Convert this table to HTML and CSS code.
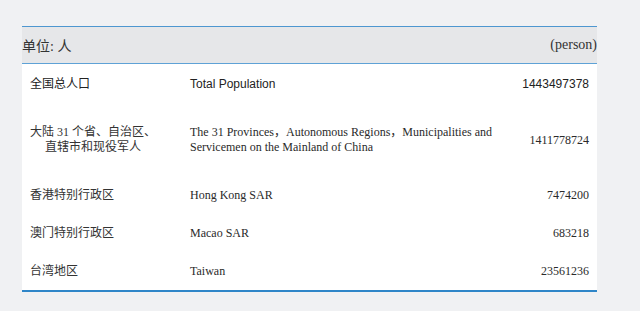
FILE: index.html
```html
<!DOCTYPE html>
<html lang="zh">
<head>
<meta charset="utf-8">
<link rel="stylesheet" href="styles.css">
</head>
<body>
<div class="page">
  <div class="table">
    <div class="head">
      <span class="unit">单位: 人</span>
      <span class="person">(person)</span>
    </div>
    <div class="row first">
      <div class="zh sans">全国总人口</div>
      <div class="en sans">Total Population</div>
      <div class="num sans">1443497378</div>
    </div>
    <div class="row tall">
      <div class="zh"><span class="wrap">大陆 31 个省、自治区、<br>直辖市和现役军人</span></div>
      <div class="en">The 31 Provinces，Autonomous Regions，Municipalities and<br>Servicemen on the Mainland of China</div>
      <div class="num">1411778724</div>
    </div>
    <div class="row">
      <div class="zh">香港特别行政区</div>
      <div class="en">Hong Kong SAR</div>
      <div class="num">7474200</div>
    </div>
    <div class="row">
      <div class="zh">澳门特别行政区</div>
      <div class="en">Macao SAR</div>
      <div class="num">683218</div>
    </div>
    <div class="row">
      <div class="zh">台湾地区</div>
      <div class="en">Taiwan</div>
      <div class="num">23561236</div>
    </div>
  </div>
</div>
</body>
</html>
```
FILE: styles.css
```css
html, body {
  margin: 0;
  padding: 0;
  background: #f0f1f3;
}
.page {
  padding: 26px 43px 0 22px;
  height: 311px;
  box-sizing: border-box;
}
.table {
  width: 575px;
  background: #ffffff;
  border-bottom: 2px solid #2f86c8;
  font-family: "Liberation Serif", "Noto Sans CJK SC", serif;
  color: #2a2a2a;
}
.head {
  display: flex;
  justify-content: space-between;
  align-items: center;
  height: 36px;
  background: #e6e7e9;
  border-top: 1px solid #4e97d0;
  border-bottom: 1px solid #5ea2d6;
  font-size: 14px;
  color: #333;
}
.row {
  display: grid;
  grid-template-columns: 160px 1fr 90px;
  align-items: center;
  padding: 0 8px;
  height: 38px;
  font-size: 12px;
  line-height: 15px;
}
.row.first {
  height: 40px;
}
.row.tall {
  height: 72px;
}
.zh {
  color: #333;
}
.wrap {
  display: inline-block;
  text-align: center;
}
.num {
  text-align: right;
}
.sans {
  font-family: "Liberation Sans", "Noto Sans CJK SC", sans-serif;
  color: #222;
  font-weight: 400;
}
```
